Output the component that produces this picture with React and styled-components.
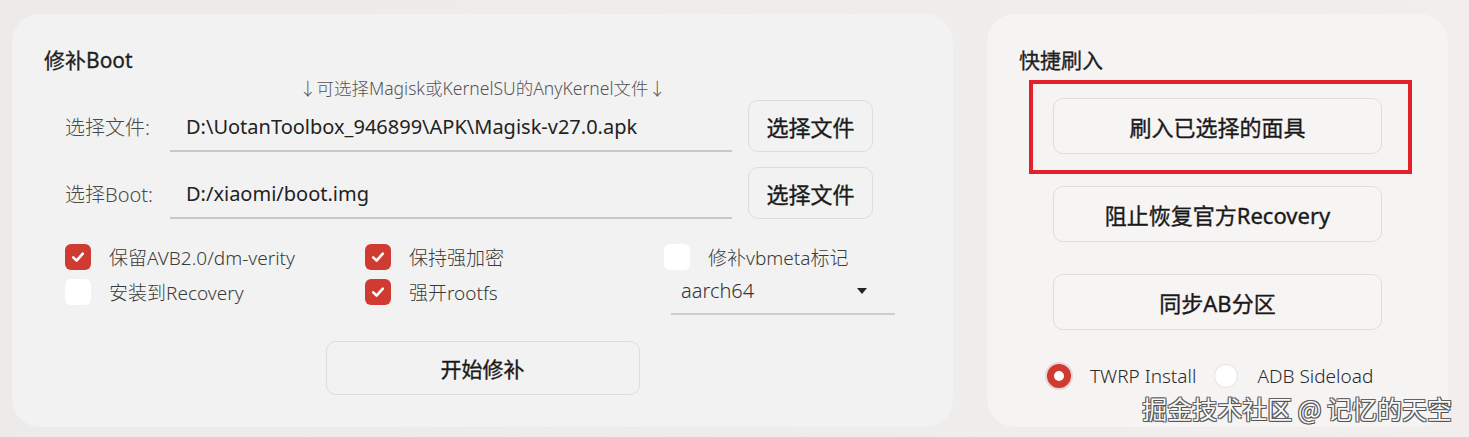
import React from "react";
import styled, { createGlobalStyle } from "styled-components";

const GlobalStyle = createGlobalStyle`
  html, body {
    margin: 0;
    padding: 0;
    background: #ecebea;
  }
  body {
    font-family: "Noto Sans", "Noto Sans CJK SC", sans-serif;
    color: #222;
  }
`;

const Page = styled.div`
  position: relative;
  width: 1469px;
  height: 437px;
  box-sizing: border-box;
  padding: 14px 21px 10px 12px;
  display: grid;
  grid-template-columns: 941px 461px;
  column-gap: 34px;
  background: linear-gradient(90deg, #ecebea 0%, #efedec 60%, #f1eeed 100%);
  overflow: hidden;
`;

const Card = styled.section`
  background: ${p => (p.warm ? "#f6f3f3" : "#f3f2f2")};
  border-radius: 28px;
  box-sizing: border-box;
  padding: 32px 32px 0 32px;
  display: flex;
  flex-direction: column;
`;

const CardTitle = styled.h2`
  margin: 0;
  font-size: 21px;
  line-height: 28px;
  font-weight: 400;
  color: #1f1f1f;
  -webkit-text-stroke: 0.3px #1f1f1f;
`;

const Hint = styled.div`
  margin-top: 4px;
  text-align: center;
  font-size: 17.5px;
  line-height: 20px;
  color: #555;
  font-weight: 300;
`;

const FileRow = styled.div`
  display: flex;
  align-items: flex-end;
  height: 52px;
  margin-top: ${p => p.gap}px;
  padding-left: 21px;
`;

const FieldLabel = styled.label`
  width: 105px;
  flex: none;
  align-self: center;
  font-size: 20px;
  color: #4a4a4a;
  font-weight: 300;
`;

const TextField = styled.div`
  width: 562px;
  height: 50px;
  box-sizing: border-box;
  border-bottom: 2px solid #c9c8c8;
  display: flex;
  align-items: center;
  padding-left: 16px;
  font-size: 20px;
  color: #222;
  white-space: nowrap;
`;

const Button = styled.button`
  box-sizing: border-box;
  border: 1.5px solid #dedcdc;
  background: ${p => (p.warm ? "#f7f4f4" : "#f3f2f2")};
  border-radius: 10px;
  font-family: inherit;
  font-size: 22px;
  font-weight: 400;
  color: #1a1a1a;
  -webkit-text-stroke: 0.35px #1a1a1a;
  cursor: pointer;
  padding: 0;
`;

const PickButton = styled(Button)`
  width: 125px;
  height: 52px;
  margin-left: 16px;
`;

const OptionGrid = styled.div`
  margin-top: 20px;
  padding-left: 21px;
  display: grid;
  grid-template-columns: 300px 299px 231px;
  grid-auto-rows: 35px;
  align-items: center;
`;

const Option = styled.div`
  display: flex;
  align-items: center;
  gap: 18px;
  font-size: 19px;
  color: #3a3a3a;
  font-weight: 300;
  white-space: nowrap;
`;

const Box = styled.span`
  width: 26px;
  height: 26px;
  border-radius: 6px;
  flex: none;
  display: flex;
  align-items: center;
  justify-content: center;
  background: ${p => (p.checked ? "#cf3a31" : "#ffffff")};
`;

const Select = styled.div`
  margin: -6px 0 -6px 7px;
  height: 46px;
  box-sizing: border-box;
  border-bottom: 2px solid #cfcdcd;
  display: flex;
  align-items: center;
  justify-content: space-between;
  padding: 0 28px 0 10px;
  font-size: 20px;
  font-weight: 300;
  color: #333;
`;

const Caret = styled.span`
  width: 0;
  height: 0;
  border-left: 5px solid transparent;
  border-right: 5px solid transparent;
  border-top: 6px solid #222;
`;

const StartButton = styled(Button)`
  align-self: center;
  width: 314px;
  height: 54px;
  margin-top: 32px;
  font-size: 21px;
`;

const QuickList = styled.div`
  display: flex;
  flex-direction: column;
  align-items: center;
  gap: 32px;
  margin-top: 24px;
`;

const Marked = styled.div`
  position: relative;
`;

const RedMark = styled.div`
  position: absolute;
  left: -24px;
  right: -30px;
  top: -18px;
  bottom: -20px;
  border: 4px solid #e3212b;
  pointer-events: none;
`;

const QuickButton = styled(Button)`
  width: 329px;
  height: 56px;
  display: block;
`;

const RadioRow = styled.div`
  margin-top: 33px;
  display: flex;
  align-items: center;
  padding-left: 28px;
  font-size: 19px;
  color: #2a2a2a;
  font-weight: 300;
`;

const RadioItem = styled.div`
  display: flex;
  align-items: center;
  gap: 19px;
  margin-right: ${p => p.gap || 0}px;
`;

const Radio = styled.span`
  width: 24px;
  height: 24px;
  border-radius: 50%;
  box-sizing: border-box;
  flex: none;
  background: #fff;
  border: ${p => (p.checked ? "7px solid #cf3a31" : "1px solid #e4e1e1")};
  box-shadow: ${p => (p.checked ? "0 0 0 2px #e6d6d5" : "none")};
`;

const Watermark = styled.div`
  position: absolute;
  right: 17px;
  bottom: 15px;
  font-family: "Noto Sans CJK SC", sans-serif;
  font-size: 25px;
  line-height: 28px;
  color: #f8f8f8;
  text-shadow: 0 0 1px #333, 1px 1px 0 #555, -1px -1px 0 #666, 1px -1px 0 #666, -1px 1px 0 #666;
  white-space: nowrap;
`;

const Check = () => (
  <svg width="16" height="16" viewBox="0 0 16 16">
    <path d="M3.2 8.4 L6.6 11.6 L12.8 4.6" fill="none" stroke="#fff" strokeWidth="2.6" strokeLinecap="round" strokeLinejoin="round" />
  </svg>
);

const CheckOption = ({ checked, children }) => (
  <Option>
    <Box checked={checked}>{checked && <Check />}</Box>
    {children}
  </Option>
);

export default function App() {
  return (
    <>
      <GlobalStyle />
      <Page>
        <Card>
          <CardTitle>修补Boot</CardTitle>
          <Hint>↓可选择Magisk或KernelSU的AnyKernel文件↓</Hint>
          <FileRow gap={2}>
            <FieldLabel>选择文件:</FieldLabel>
            <TextField>D:\UotanToolbox_946899\APK\Magisk-v27.0.apk</TextField>
            <PickButton>选择文件</PickButton>
          </FileRow>
          <FileRow gap={15}>
            <FieldLabel>选择Boot:</FieldLabel>
            <TextField>D:/xiaomi/boot.img</TextField>
            <PickButton>选择文件</PickButton>
          </FileRow>
          <OptionGrid>
            <CheckOption checked>保留AVB2.0/dm-verity</CheckOption>
            <CheckOption checked>保持强加密</CheckOption>
            <CheckOption>修补vbmeta标记</CheckOption>
            <CheckOption>安装到Recovery</CheckOption>
            <CheckOption checked>强开rootfs</CheckOption>
            <Select>
              aarch64
              <Caret />
            </Select>
          </OptionGrid>
          <StartButton>开始修补</StartButton>
        </Card>
        <Card warm>
          <CardTitle>快捷刷入</CardTitle>
          <QuickList>
            <Marked>
              <QuickButton warm>刷入已选择的面具</QuickButton>
              <RedMark />
            </Marked>
            <QuickButton warm>阻止恢复官方Recovery</QuickButton>
            <QuickButton warm>同步AB分区</QuickButton>
          </QuickList>
          <RadioRow>
            <RadioItem gap={18}>
              <Radio checked />
              TWRP Install
            </RadioItem>
            <RadioItem>
              <Radio />
              ADB Sideload
            </RadioItem>
          </RadioRow>
        </Card>
        <Watermark>掘金技术社区 @ 记忆的天空</Watermark>
      </Page>
    </>
  );
}
